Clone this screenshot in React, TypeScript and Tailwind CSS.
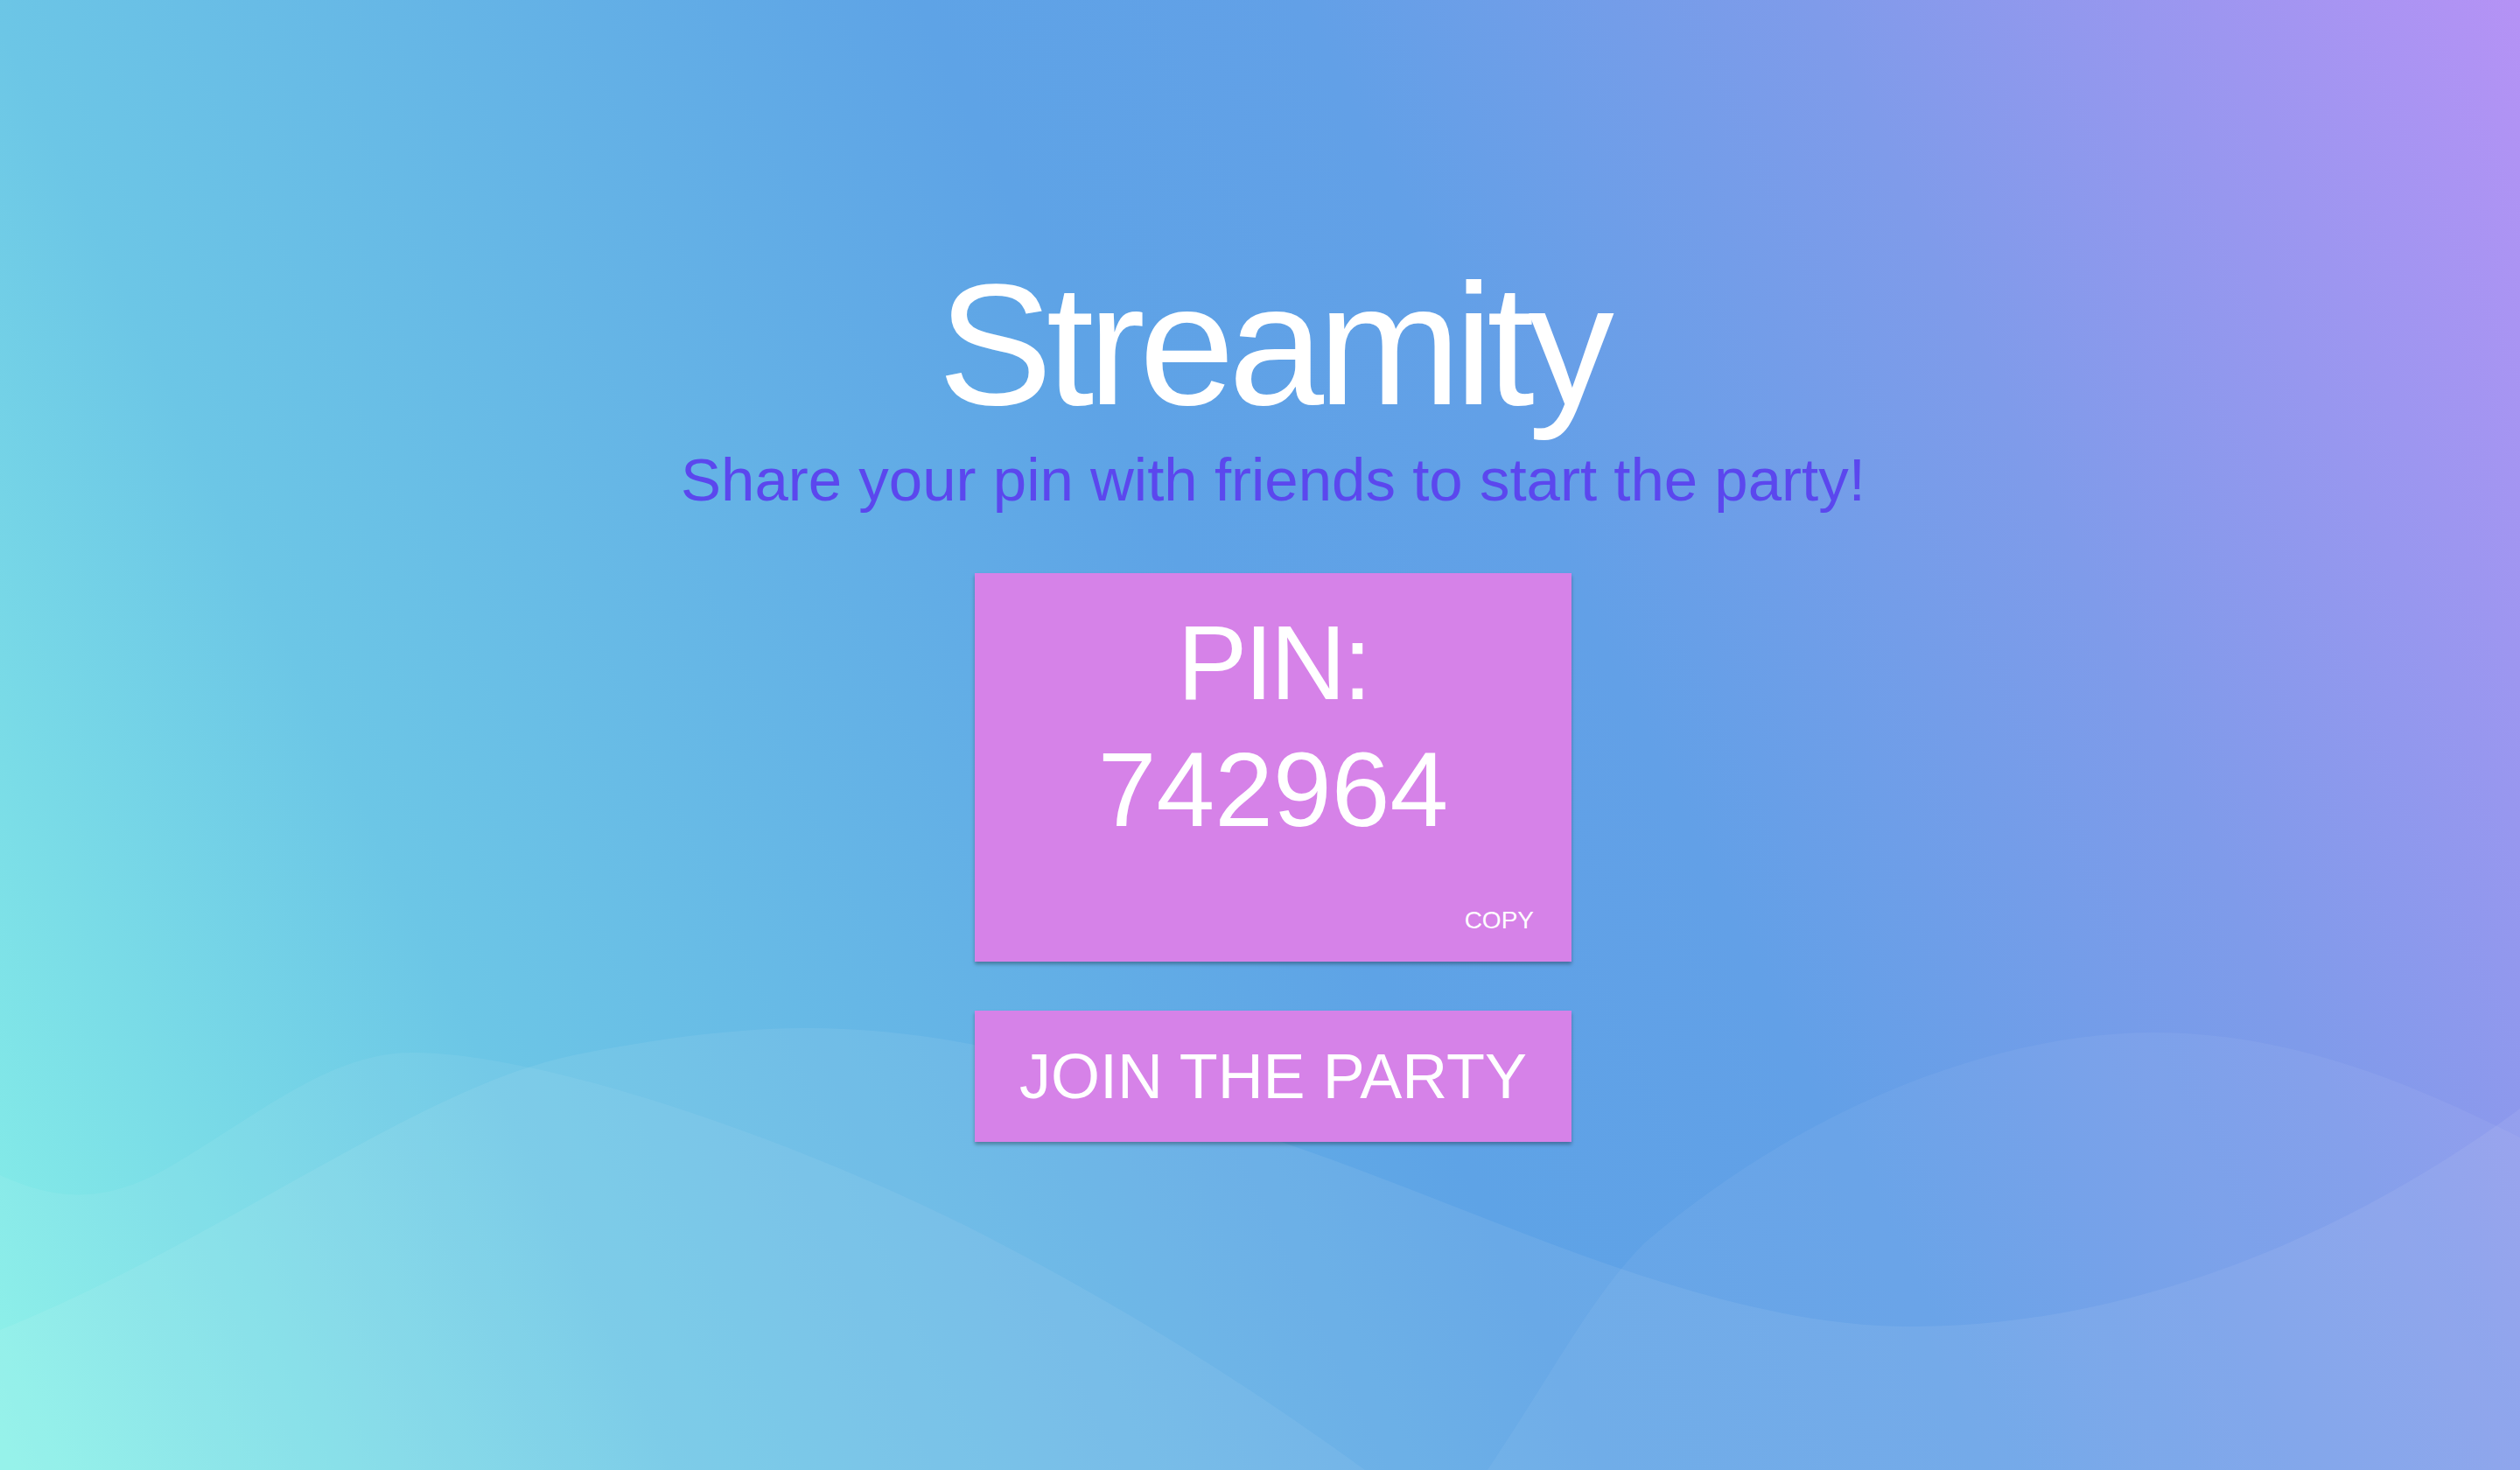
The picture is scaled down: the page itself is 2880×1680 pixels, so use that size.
import React from "react";

function Waves() {
  return (
    <svg
      className="absolute inset-0 h-full w-full"
      viewBox="0 0 2880 1680"
      preserveAspectRatio="none"
      aria-hidden="true"
    >
      <path
        d="M0,1343 C50,1365 110,1385 200,1330 C300,1270 380,1203 470,1203 C620,1203 900,1300 1102,1400 C1300,1500 1450,1600 1560,1680 L0,1680 Z"
        fill="#ffffff"
        fillOpacity="0.06"
      />
      <path
        d="M0,1520 C250,1420 480,1240 660,1205 C760,1185 850,1175 918,1175 C1150,1175 1300,1250 1470,1307 C1700,1385 1950,1516 2186,1516 C2450,1516 2700,1400 2880,1267 L2880,1680 L0,1680 Z"
        fill="#ffffff"
        fillOpacity="0.07"
      />
      <path
        d="M1700,1680 C1780,1560 1820,1480 1880,1420 C2080,1250 2300,1180 2461,1180 C2620,1180 2760,1240 2880,1300 L2880,1680 Z"
        fill="#ffffff"
        fillOpacity="0.05"
      />
    </svg>
  );
}

export default function App() {
  return (
    <div className="relative h-[1680px] w-full overflow-hidden bg-[linear-gradient(65deg,#88f2e8_0%,#6cc6e6_21%,#5ea3e6_50%,#62a0e7_62%,#7f9bea_78%,#b592f5_100%)] font-['Liberation_Sans',Arial,sans-serif]">
      <Waves />

      <main className="relative z-10 flex flex-col items-center pl-[30px] pt-[297px]">
        <h1 className="text-[196px] font-normal leading-none tracking-[-0.035em] text-white">Streamity</h1>
        <p className="mt-[21px] text-[69px] leading-none text-[#5b47ee]">
          Share your pin with friends to start the party!
        </p>

        <section className="mt-[72px] flex h-[444px] w-[682px] flex-col items-center bg-[#d682e8] pt-[30px] text-white shadow-[0_3px_4px_rgba(0,0,0,0.3)]">
          <div className="text-[120px] leading-[145px] tracking-[-0.03em]">PIN:</div>
          <div className="text-[120px] leading-[145px]">742964</div>
          <button className="mt-auto self-end pb-[33px] pr-[43px] text-[28px] leading-none text-white">COPY</button>
        </section>

        <button className="mt-[56px] flex h-[150px] w-[682px] items-center justify-center bg-[#d682e8] text-[72px] leading-none text-white shadow-[0_3px_4px_rgba(0,0,0,0.3)]">
          JOIN THE PARTY
        </button>
      </main>
    </div>
  );
}
